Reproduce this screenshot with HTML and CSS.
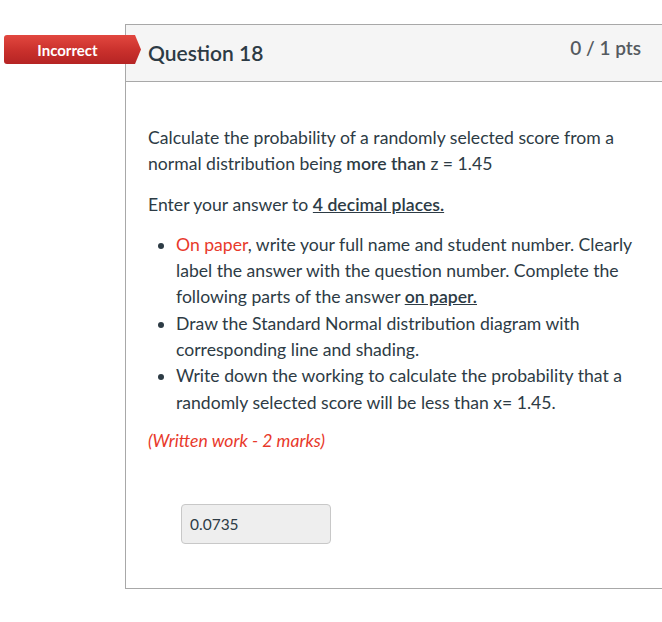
FILE: index.html
```html
<!DOCTYPE html>
<html>
<head>
<meta charset="utf-8">
<link rel="stylesheet" href="styles.css">
</head>
<body>
<div class="page">
  <div class="badge">Incorrect</div>
  <div class="card">
    <div class="card-header">
      <h2 class="title">Question 18</h2>
      <span class="pts">0 / 1 pts</span>
    </div>
    <div class="card-body">
      <p>Calculate the probability of a randomly selected score from a normal distribution being <strong>more than</strong> z = 1.45</p>
      <p>Enter your answer to <strong class="u">4 decimal places.</strong></p>
      <ul class="list">
        <li><span class="red">On paper</span>, write your full name and student number. Clearly label the answer with the question number. Complete the following parts of the answer <strong class="u">on paper.</strong></li>
        <li>Draw the Standard Normal distribution diagram with corresponding line and shading.</li>
        <li>Write down the working to calculate the probability that a randomly selected score will be less than x= 1.45.</li>
      </ul>
      <p class="note">(Written work - 2 marks)</p>
      <div class="answer"><div class="answer-box">0.0735</div></div>
    </div>
  </div>
</div>
</body>
</html>
```
FILE: styles.css
```css
html, body {
  margin: 0;
  padding: 0;
  background: #fff;
  overflow: hidden;
}
body {
  font-family: Lato, "Open Sans", sans-serif;
  color: #2d3b45;
}
.page {
  position: relative;
  padding: 24px 0 0 125px;
  width: 662px;
  box-sizing: border-box;
}
.badge {
  position: absolute;
  left: 4px;
  top: 35px;
  width: 137px;
  height: 29px;
  box-sizing: border-box;
  padding-right: 10px;
  border-radius: 3px;
  background: linear-gradient(#e2473f, #c9302c 55%, #b52424);
  clip-path: polygon(0 0, 131px 0, 137px 50%, 131px 100%, 0 100%);
  color: #fff;
  font-weight: 700;
  font-size: 15px;
  display: flex;
  align-items: center;
  justify-content: center;
  z-index: 2;
}
.card {
  width: 545px;
  border: 1px solid #a8a8a8;
  box-sizing: border-box;
}
.card-header {
  height: 56px;
  background: #f5f5f5;
  border-bottom: 1px solid #a8a8a8;
  display: flex;
  justify-content: space-between;
  align-items: flex-start;
  padding: 0 28px 0 22px;
}
.title {
  margin: 15px 0 0;
  font-size: 21px;
  font-weight: 600;
  line-height: 26px;
  color: #2d3b45;
}
.pts {
  margin-top: 11px;
  font-size: 19px;
  font-weight: 600;
  line-height: 24px;
  color: #555a5f;
}
.card-body {
  padding: 43px 25px 44px 22px;
  font-size: 17.6px;
  line-height: 26.3px;
}
.card-body p {
  margin: 0 0 14px;
}
.u {
  text-decoration: underline;
}
strong {
  font-weight: 600;
}
.list {
  margin: 0 0 12px;
  padding-left: 28px;
}
.red {
  color: #e8392b;
}
.note {
  color: #e8392b;
  font-style: italic;
}
.card-body p.note {
  margin-bottom: 0;
}
.answer {
  padding: 50px 0 0 33px;
}
.answer-box {
  width: 150px;
  height: 40px;
  box-sizing: border-box;
  background: #eeeeee;
  border: 1px solid #c8c8c8;
  border-radius: 4px;
  font-size: 15.5px;
  line-height: 38px;
  padding-left: 8px;
  color: #2d3b45;
}
```
